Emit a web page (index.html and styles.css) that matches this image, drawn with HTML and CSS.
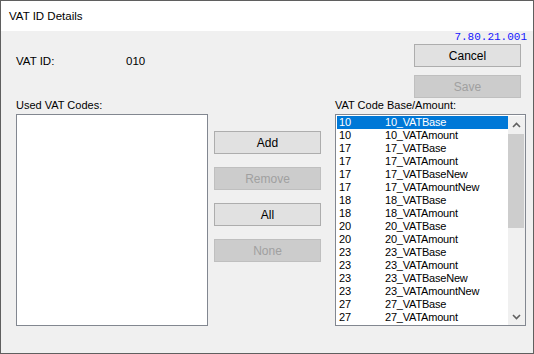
FILE: index.html
```html
<!DOCTYPE html>
<html>
<head lang="en">
    <meta charset="UTF-8">
    <title>VAT ID Details</title>
    <link rel="stylesheet" href="styles.css">
</head>
<body>
<div class="window">
    <div class="titlebar">VAT ID Details</div>

    <div class="content">
        <div class="top">
            <div class="vat-id">
                <span class="vat-label">VAT ID:</span><span>010</span>
            </div>
            <div class="top-right">
                <div class="version">7.80.21.001</div>
                <button class="btn">Cancel</button>
                <button class="btn" disabled>Save</button>
            </div>
        </div>

        <div class="labels">
            <span class="label-used">Used VAT Codes:</span>
            <span>VAT Code Base/Amount:</span>
        </div>

        <div class="main">
            <div class="listbox used"></div>

            <div class="actions">
                <button class="btn">Add</button>
                <button class="btn" disabled>Remove</button>
                <button class="btn">All</button>
                <button class="btn" disabled>None</button>
            </div>

            <div class="listbox codes">
                <ul class="items">
                    <li class="selected"><span class="code">10</span>10_VATBase</li>
                    <li><span class="code">10</span>10_VATAmount</li>
                    <li><span class="code">17</span>17_VATBase</li>
                    <li><span class="code">17</span>17_VATAmount</li>
                    <li><span class="code">17</span>17_VATBaseNew</li>
                    <li><span class="code">17</span>17_VATAmountNew</li>
                    <li><span class="code">18</span>18_VATBase</li>
                    <li><span class="code">18</span>18_VATAmount</li>
                    <li><span class="code">20</span>20_VATBase</li>
                    <li><span class="code">20</span>20_VATAmount</li>
                    <li><span class="code">23</span>23_VATBase</li>
                    <li><span class="code">23</span>23_VATAmount</li>
                    <li><span class="code">23</span>23_VATBaseNew</li>
                    <li><span class="code">23</span>23_VATAmountNew</li>
                    <li><span class="code">27</span>27_VATBase</li>
                    <li><span class="code">27</span>27_VATAmount</li>
                </ul>
                <div class="scrollbar">
                    <div class="arrow">
                        <svg width="9" height="6" viewBox="0 0 9 6"><polyline points="1,5 4.5,1.5 8,5" fill="none" stroke="#606060" stroke-width="1.6"/></svg>
                    </div>
                    <div class="track">
                        <div class="thumb"></div>
                    </div>
                    <div class="arrow">
                        <svg width="9" height="6" viewBox="0 0 9 6"><polyline points="1,1 4.5,4.5 8,1" fill="none" stroke="#606060" stroke-width="1.6"/></svg>
                    </div>
                </div>
            </div>
        </div>
    </div>
</div>
</body>
</html>
```

FILE: styles.css
```css
* {
    margin: 0;
    padding: 0;
    box-sizing: border-box;
}

ul {
    list-style: none;
}

body {
    font-family: "Liberation Sans", Arial, sans-serif;
    font-size: 11px;
    color: #000;
    background: #fff;
}

.window {
    width: 534px;
    height: 354px;
    border: 1px solid #5f5f5f;
    display: flex;
    flex-direction: column;
}

.titlebar {
    height: 30px;
    line-height: 30px;
    padding-left: 8px;
    font-size: 11.5px;
    background: #fff;
}

.content {
    flex: 1;
    background: #f0f0f0;
    padding: 0 6px 0 15px;
}

.top {
    height: 67px;
    display: flex;
    justify-content: space-between;
}

.vat-id {
    margin-top: 23px;
    line-height: 14px;
    font-size: 11.5px;
}

.vat-label {
    display: inline-block;
    width: 110px;
}

.top-right {
    width: 113px;
    display: flex;
    flex-direction: column;
    align-items: flex-start;
    gap: 8px;
}

.version {
    align-self: flex-end;
    height: 13px;
    line-height: 12px;
    margin-bottom: -8px;
    font-family: "Liberation Mono", "Courier New", monospace;
    font-size: 11px;
    color: #1515ff;
}

.btn {
    width: 107px;
    height: 23px;
    background: #e1e1e1;
    border: 1px solid #adadad;
    font-family: inherit;
    font-size: 12px;
    color: #000;
}

.btn:disabled {
    background: #cccccc;
    border-color: #bfbfbf;
    color: #a0a0a0;
}

.labels {
    height: 16px;
    line-height: 14px;
    display: flex;
}

.label-used {
    width: 319px;
}

.main {
    display: flex;
    align-items: flex-start;
}

.listbox {
    height: 212px;
    background: #fff;
    border: 1px solid #828790;
}

.used {
    width: 192px;
}

.actions {
    width: 107px;
    margin: 17px 14px 0 6px;
    display: flex;
    flex-direction: column;
    gap: 13px;
}

.codes {
    width: 191px;
    display: flex;
    padding: 1px 0 0 1px;
}

.items {
    flex: 1;
    font-size: 11px;
    letter-spacing: -0.2px;
}

.items li {
    height: 13px;
    line-height: 13px;
    padding-left: 2px;
    white-space: nowrap;
}

.items li.selected {
    background: #0078d7;
    color: #fff;
}

.code {
    display: inline-block;
    width: 46px;
}

.scrollbar {
    width: 17px;
    height: 209px;
    background: #f0f0f0;
    display: flex;
    flex-direction: column;
}

.arrow {
    height: 17px;
    display: flex;
    align-items: center;
    justify-content: center;
}

.track {
    flex: 1;
}

.thumb {
    height: 94px;
    margin: 1px 1px 0 0;
    background: #cdcdcd;
}
```
